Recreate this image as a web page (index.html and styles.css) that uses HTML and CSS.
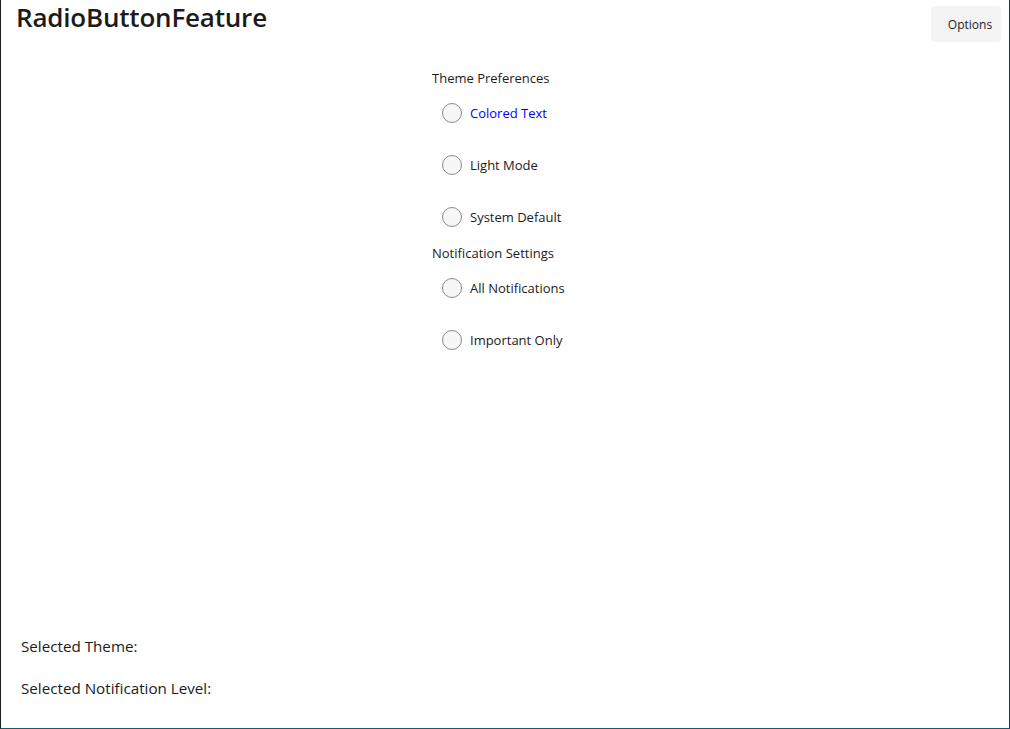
FILE: index.html
```html
<!DOCTYPE html>
<html lang="en">
<head>
<meta charset="utf-8">
<title>RadioButtonFeature</title>
<link rel="stylesheet" href="styles.css">
</head>
<body>
<div class="window">
  <header class="topbar">
    <h1 class="title">RadioButtonFeature</h1>
    <button class="options-btn">Options</button>
  </header>
  <main class="content">
    <section class="group">
      <div class="group-header">Theme Preferences</div>
      <div class="radios">
        <label class="radio"><span class="circle"></span><span class="radio-text blue">Colored Text</span></label>
        <label class="radio"><span class="circle"></span><span class="radio-text">Light Mode</span></label>
        <label class="radio"><span class="circle"></span><span class="radio-text">System Default</span></label>
      </div>
    </section>
    <section class="group">
      <div class="group-header">Notification Settings</div>
      <div class="radios">
        <label class="radio"><span class="circle"></span><span class="radio-text">All Notifications</span></label>
        <label class="radio"><span class="circle"></span><span class="radio-text">Important Only</span></label>
      </div>
    </section>
  </main>
  <footer class="status">
    <div class="status-line">Selected Theme:</div>
    <div class="status-line">Selected Notification Level:</div>
  </footer>
</div>
</body>
</html>
```

FILE: styles.css
```css
html, body {
  margin: 0;
  padding: 0;
  height: 100%;
  background: #ffffff;
}

body {
  font-family: "Open Sans", "Noto Sans", sans-serif;
  color: #1b1b1b;
}

.window {
  box-sizing: border-box;
  height: 100vh;
  display: flex;
  flex-direction: column;
  border-left: 1px solid #1f1f1f;
  border-right: 1px solid #1d3557;
  border-bottom: 1px solid #125a75;
}

.topbar {
  display: flex;
  justify-content: space-between;
  align-items: flex-start;
  padding: 0 8px 0 15px;
}

.title {
  margin: 0;
  font-size: 26px;
  font-weight: 600;
  line-height: 34px;
  letter-spacing: -0.2px;
  color: #1b1b1b;
}

.options-btn {
  margin-top: 6px;
  width: 70px;
  height: 36px;
  border: none;
  border-radius: 4px;
  background: #f4f4f4;
  font-family: "Open Sans", "Noto Sans", sans-serif;
  font-size: 12px;
  color: #1b1b1b;
  padding: 0 0 0 8px;
  text-align: center;
}

.content {
  flex: 1;
  display: flex;
  flex-direction: column;
  gap: 10px;
  padding: 26px 0 0 431px;
}

.group-header {
  font-size: 13px;
  line-height: 20px;
  margin-bottom: 9px;
}

.radios {
  display: flex;
  flex-direction: column;
  gap: 20px;
  padding-left: 10px;
}

.radio {
  display: flex;
  align-items: center;
  height: 32px;
  gap: 8px;
  font-size: 13px;
}

.circle {
  box-sizing: border-box;
  width: 20px;
  height: 20px;
  border-radius: 50%;
  border: 1px solid #8a8a8a;
  background: #f7f7f7;
  flex: none;
}

.radio-text.blue {
  color: #0000ff;
}

.status {
  display: flex;
  flex-direction: column;
  gap: 22px;
  padding: 0 0 30px 20px;
}

.status-line {
  font-size: 15.2px;
  line-height: 20px;
}
```
